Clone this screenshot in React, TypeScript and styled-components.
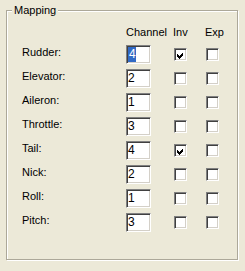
import React from 'react';
import styled, {createGlobalStyle} from 'styled-components';

const rows = [
    {name: 'Rudder', channel: 4, inv: true, selected: true},
    {name: 'Elevator', channel: 2, inv: false},
    {name: 'Aileron', channel: 1, inv: false},
    {name: 'Throttle', channel: 3, inv: false},
    {name: 'Tail', channel: 4, inv: true},
    {name: 'Nick', channel: 2, inv: false},
    {name: 'Roll', channel: 1, inv: false},
    {name: 'Pitch', channel: 3, inv: false},
];

function CheckBox({checked}: { checked?: boolean }) {
    return (<StyledCheckBox>
        {checked && <svg width="9" height="9" viewBox="0 0 9 9" shapeRendering="crispEdges">
            <path d="M1 3h1v1h1v1h1v-1h1v-1h1v-1h1v3h-1v1h-1v1h-1v1h-1v-1h-1v-1h-1z" fill="#000"/>
        </svg>}
    </StyledCheckBox>);
}

function App() {
    return (<Page>
        <GlobalStyle/>
        <GroupBox>
            <Legend>Mapping</Legend>
            <Grid>
                <span/>
                <Header>Channel</Header>
                <Header>Inv</Header>
                <Header>Exp</Header>
                {rows.map(r => (<React.Fragment key={r.name}>
                    <Label>{r.name}:</Label>
                    <Field>{r.selected ? <Selected>{r.channel}</Selected> : r.channel}</Field>
                    <CheckBox checked={r.inv}/>
                    <CheckBox/>
                </React.Fragment>))}
            </Grid>
        </GroupBox>
    </Page>);
}

const GlobalStyle = createGlobalStyle`
  html, body {
    margin: 0;
    padding: 0;
    background: #ece9d8;
  }

  body {
    width: 245px;
    height: 271px;
    overflow: hidden;
    font-family: "Liberation Sans", Arial, sans-serif;
    font-size: 11px;
    color: #000;
  }
`;

const Page = styled.div`
  padding: 4px 0 0 6px;
`;

const GroupBox = styled.fieldset`
  margin: 0;
  padding: 0;
  width: 232px;
  height: 256px;
  box-sizing: border-box;
  min-inline-size: 0;
  border: 1px solid #aca899;
  box-shadow: inset 1px 1px #fff, 1px 1px #fff;
`;

const Legend = styled.legend`
  margin-left: 5px;
  padding: 0 2px;
  line-height: 13px;
  background: #ece9d8;
`;

const Grid = styled.div`
  display: grid;
  grid-template-columns: 104px 47px 32px 1fr;
  grid-template-rows: 19px;
  grid-auto-rows: 24px;
  padding: 9px 0 0 15px;
`;

const Header = styled.span`
  line-height: 13px;
`;

const Label = styled.span`
  padding-top: 1px;
  line-height: 13px;
`;

const Field = styled.div`
  width: 25px;
  height: 19px;
  box-sizing: border-box;
  padding-left: 1px;
  background: #fff;
  border: 1px solid;
  border-color: #808080 #fff #fff #808080;
  box-shadow: inset 1px 1px #404040, inset -1px -1px #d4d0c8;
  font-size: 12px;
  line-height: 15px;
  padding-top: 1px;
`;

const Selected = styled.span`
  display: inline-block;
  padding: 0 0 0 1px;
  background: #316ac5;
  color: #fff;
`;

const StyledCheckBox = styled.div`
  width: 13px;
  height: 13px;
  margin: 3px 0 0 1px;
  box-sizing: border-box;
  background: #fff;
  border: 1px solid;
  border-color: #808080 #fff #fff #808080;
  box-shadow: inset 1px 1px #404040, inset -1px -1px #d4d0c8;
  display: flex;
  align-items: center;
  justify-content: center;

  svg {
    display: block;
    margin: 1px 0 0 0;
  }
`;

export default App;
